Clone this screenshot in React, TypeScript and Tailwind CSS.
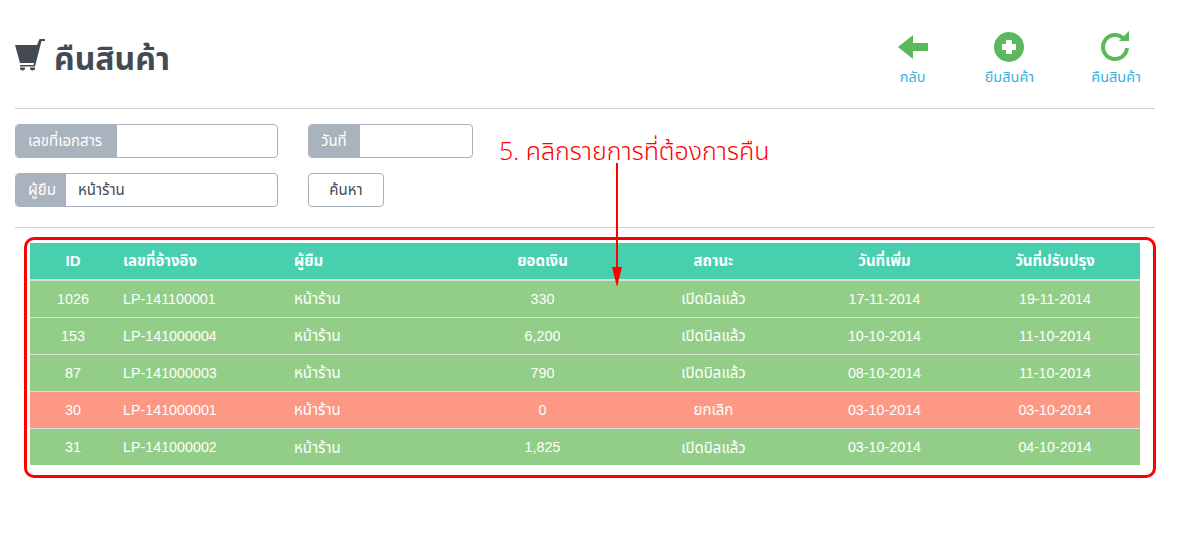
import React from 'react';

const sans = "font-['Liberation_Sans','Noto_Sans_Thai','Noto_Sans',sans-serif]";

const rows = [
  { id: '1026', ref: 'LP-141100001', amount: '330', status: 'เปิดบิลแล้ว', created: '17-11-2014', updated: '19-11-2014', cancelled: false },
  { id: '153', ref: 'LP-141000004', amount: '6,200', status: 'เปิดบิลแล้ว', created: '10-10-2014', updated: '11-10-2014', cancelled: false },
  { id: '87', ref: 'LP-141000003', amount: '790', status: 'เปิดบิลแล้ว', created: '08-10-2014', updated: '11-10-2014', cancelled: false },
  { id: '30', ref: 'LP-141000001', amount: '0', status: 'ยกเลิก', created: '03-10-2014', updated: '03-10-2014', cancelled: true },
  { id: '31', ref: 'LP-141000002', amount: '1,825', status: 'เปิดบิลแล้ว', created: '03-10-2014', updated: '04-10-2014', cancelled: false },
];

const CartIcon = () => (
  <svg width="30" height="32" viewBox="0 0 30 32" className="-mt-[2px] shrink-0 self-start text-[#434a54]" fill="currentColor">
    <path d="M0 6 H22 L24.5 0 H30 V2 H26.5 L20 27.5 H5 V26 H18.5 L19 24 H5 Z" />
    <path d="M5 28.5 H10 V29 A2.5 2.5 0 0 1 5 29 Z" />
    <path d="M15 28.5 H20 V29 A2.5 2.5 0 0 1 15 29 Z" />
  </svg>
);

const BackIcon = () => (
  <svg width="30" height="24" viewBox="0 0 30 24" fill="#5cb85c">
    <path d="M0 12 L15 0 V8 H30 V16 H15 V24 Z" />
  </svg>
);

const PlusIcon = () => (
  <svg width="30" height="30" viewBox="0 0 30 30">
    <circle cx="15" cy="15" r="15" fill="#5cb85c" />
    <path d="M12 8 H18 V12 H22 V18 H18 V22 H12 V18 H8 V12 H12 Z" fill="#fff" />
  </svg>
);

const RefreshIcon = () => (
  <svg width="30" height="32" viewBox="0 0 30 32" fill="none">
    <path d="M23 8 A12 12 0 1 0 26 17" stroke="#5cb85c" strokeWidth="4" />
    <path d="M28 0 V10 H18 Z" fill="#5cb85c" />
  </svg>
);

const Action = ({ icon, label }: { icon: React.ReactNode; label: string }) => (
  <div className="flex flex-col items-center">
    <div className="flex h-[30px] items-center justify-center">{icon}</div>
    <span className="mt-[5px] text-[14.5px] leading-[20px] text-[#3bafda]">{label}</span>
  </div>
);

const Field = ({ label, value, width, labelWidth }: { label: string; value?: string; width: string; labelWidth: string }) => (
  <div className={`flex h-[34px] overflow-hidden rounded border border-[#aab2bd] ${width}`}>
    <span className={`flex shrink-0 items-center bg-[#aab2bd] pl-3 text-[15px] text-white ${labelWidth}`}>{label}</span>
    <span className="flex flex-1 items-center px-3 text-[15px] text-[#434a54]">{value}</span>
  </div>
);

export default function App() {
  return (
    <div className={`relative min-h-[539px] w-[1170px] bg-white px-[15px] ${sans}`}>
      <header className="flex h-[109px] w-[1140px] items-start justify-between border-b border-[#d0d0d0] pt-[32px]">
        <h1 className="flex gap-[9px] pt-[9px] text-[32px] leading-[36px] font-bold text-[#434a54]">
          <CartIcon />
          คืนสินค้า
        </h1>
        <div className="mr-[14px] flex gap-[57px]">
          <Action icon={<BackIcon />} label="กลับ" />
          <Action icon={<PlusIcon />} label="ยืมสินค้า" />
          <Action icon={<RefreshIcon />} label="คืนสินค้า" />
        </div>
      </header>

      <section className="relative flex h-[119px] w-[1140px] gap-[30px] border-b border-[#d0d0d0] pt-[15px]">
        <div className="flex flex-col gap-[15px]">
          <Field label="เลขที่เอกสาร" width="w-[263px]" labelWidth="w-[101px]" />
          <Field label="ผู้ยืม" value="หน้าร้าน" width="w-[263px]" labelWidth="w-[50px]" />
        </div>
        <div className="flex flex-col items-start gap-[15px]">
          <Field label="วันที่" width="w-[165px]" labelWidth="w-[51px]" />
          <button className="h-[34px] w-[76px] rounded border border-[#aab2bd] text-[15px] text-[#434a54]">ค้นหา</button>
        </div>
        <span className="absolute top-[24px] left-[484px] font-['Open_Sans','Noto_Sans_Thai','Noto_Sans',sans-serif] text-[25px] leading-[34px] font-light text-[#ff0000]">5. คลิกรายการที่ต้องการคืน</span>
      </section>

      <div className="mt-[9px] ml-[9px] w-[1132px] rounded-[10px] border-[3px] border-[#ff0000] pt-[3px] pr-[13px] pb-[10px] pl-[3px]">
        <table className="w-[1110px] table-fixed border-separate border-spacing-0 text-[14.3px] text-white">
          <thead>
            <tr className="bg-[#48cfad] text-[15px] font-bold">
              <th className="h-[38px] w-[86px] border-b-2 border-[#dddddd] text-center">ID</th>
              <th className="w-[170px] border-b-2 border-[#dddddd] px-[7px] text-left">เลขที่อ้างอิง</th>
              <th className="w-[171px] border-b-2 border-[#dddddd] px-[8px] text-left">ผู้ยืม</th>
              <th className="w-[171px] border-b-2 border-[#dddddd] text-center">ยอดเงิน</th>
              <th className="w-[171px] border-b-2 border-[#dddddd] text-center">สถานะ</th>
              <th className="w-[171px] border-b-2 border-[#dddddd] text-center">วันที่เพิ่ม</th>
              <th className="w-[170px] border-b-2 border-[#dddddd] text-center">วันที่ปรับปรุง</th>
            </tr>
          </thead>
          <tbody>
            {rows.map((r, i) => {
              const cell = i === rows.length - 1 ? 'h-[36px] pt-[2px]' : 'h-[37px] border-b border-[#dddddd] pt-[1px]';
              return (
                <tr key={r.id} className={r.cancelled ? 'bg-[#fc9883]' : 'bg-[#92ce88]'}>
                  <td className={`text-center ${cell}`}>{r.id}</td>
                  <td className={`px-[7px] ${cell}`}>{r.ref}</td>
                  <td className={`px-[8px] text-[15px] ${cell}`}>หน้าร้าน</td>
                  <td className={`text-center ${cell}`}>{r.amount}</td>
                  <td className={`text-center text-[15px] ${cell}`}>{r.status}</td>
                  <td className={`text-center ${cell}`}>{r.created}</td>
                  <td className={`text-center ${cell}`}>{r.updated}</td>
                </tr>
              );
            })}
          </tbody>
        </table>
      </div>

      <svg width="20" height="126" viewBox="0 0 20 126" className="pointer-events-none absolute top-[163px] left-[607px]">
        <path d="M10 0 V106" stroke="#ff0000" strokeWidth="2" />
        <path d="M5 104 H15 L10 124 Z" fill="#ff0000" />
      </svg>
    </div>
  );
}
